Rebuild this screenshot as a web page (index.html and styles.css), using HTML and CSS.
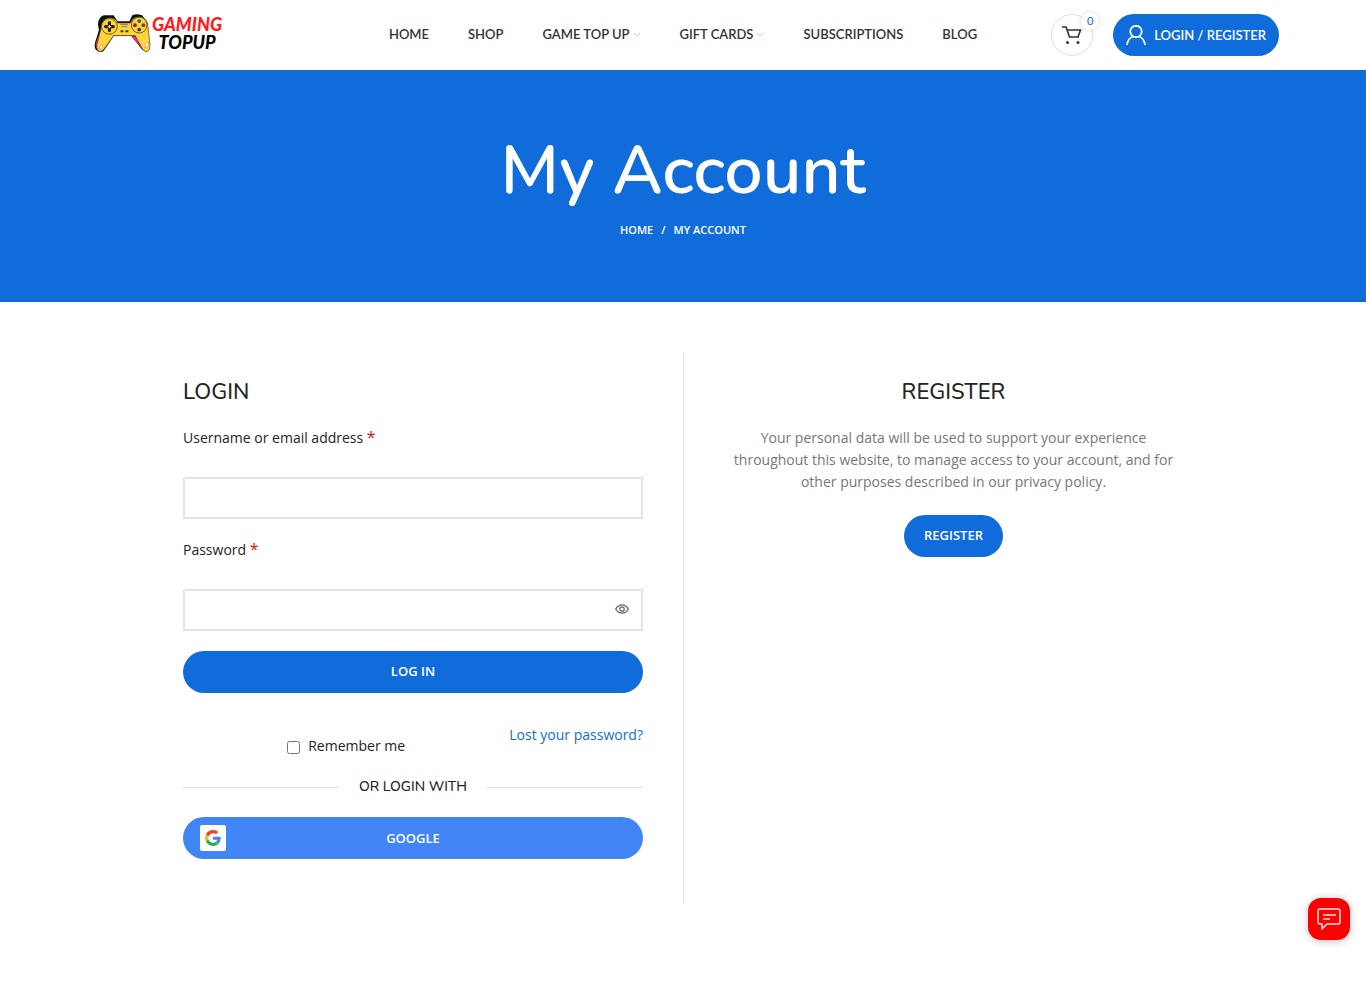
FILE: index.html
```html
<!DOCTYPE html>
<html lang="en">
<head>
  <meta charset="UTF-8" />
  <meta name="viewport" content="width=device-width, initial-scale=1.0" />
  <title>My Account - Gaming Topup</title>
  <link rel="stylesheet" href="styles.css">
</head>
<body>
  <header class="header">
    <div class="header-inner">
      <a class="logo" href="#">
        <svg class="logo-pad" viewBox="0 0 58 42" aria-hidden="true">
          <path d="M4 12Q5 4 10 3L20 3L24 9H36L39 3Q43 1 49 3L54 10L56 34Q54 40 49 38L38 24H20L10 39Q6 42 2 38Q0 36 1 31L5 18Z" fill="#111"/>
          <path d="M6 20L2 31Q1 36 4 38L12 26ZM38 24L49 37L49 25Z" fill="#f0287f"/>
          <path d="M10 8Q16 3 23 8L24 10.700H37L39 7Q46 2 52 7Q55 10 55 15L57 33Q57 40 53 40Q50 40 48 35L42 23.700H20L12 35Q9 40 6 40Q2 39 3 33L7 17Q7 11 10 8Z" fill="#ffd43b" stroke="#222" stroke-width=".6"/>
          <circle cx="15.700" cy="14.300" r="8" fill="#ffd43b" stroke="#463c18" stroke-width=".8"/>
          <circle cx="46" cy="13" r="8" fill="#ffd43b" stroke="#463c18" stroke-width=".8"/>
          <path d="M15.700 10.500v8M11.700 14.500h8" stroke="#222" stroke-width="3.200" stroke-linecap="round"/>
          <path d="M14 14.500h3.400M15.700 12.800v3.400" stroke="#ffd43b" stroke-width="1.200"/>
          <circle cx="46" cy="8.800" r="1.900" fill="#176b56"/>
          <circle cx="41.700" cy="13" r="1.900" fill="#7b2450"/>
          <circle cx="50.300" cy="13" r="1.900" fill="#a8273c"/>
          <circle cx="46" cy="17.500" r="1.900" fill="#283f60"/>
          <path d="M27 12.300h8" stroke="#e66156" stroke-width="1.500"/>
          <path d="M28 14.500h6" stroke="#4dbd8b" stroke-width="1.400"/>
          <path d="M27 19.300h3M32 19.300h3" stroke="#4c4217" stroke-width="2"/>
          <path d="M5 38q1-6 4-5q1 3-4 5M55 30q-4 2-3 6q4-1 3-6" fill="#fff" stroke="#777" stroke-width=".5"/>
        </svg>
        <span class="logo-text"><span class="logo-red">GAMING</span><span>TOPUP</span></span>
      </a>

      <nav class="nav">
        <a href="#">HOME</a>
        <a href="#">SHOP</a>
        <a href="#">GAME TOP UP <svg class="chevron" viewBox="0 0 8 5"><path d="M1 1l3 3 3-3"/></svg></a>
        <a href="#">GIFT CARDS <svg class="chevron" viewBox="0 0 8 5"><path d="M1 1l3 3 3-3"/></svg></a>
        <a href="#">SUBSCRIPTIONS</a>
        <a href="#">BLOG</a>
      </nav>

      <div class="header-tools">
        <a class="cart" href="#" aria-label="Shopping cart">
          <svg viewBox="0 0 20 20" width="20" height="20"><path d="M0 2h4L7.500 12H17M5 5h13.500L16 12" fill="none" stroke="#333" stroke-width="1.600"/><circle cx="5.500" cy="17.500" r="1.500" fill="#333"/><circle cx="16" cy="17.500" r="1.500" fill="#333"/></svg>
          <span class="cart-count">0</span>
        </a>
        <a class="account-btn" href="#">
          <svg viewBox="0 0 20 20" width="20" height="20"><circle cx="10" cy="6.500" r="5.700"/><path d="M1 20q1-7 6-8.500M19 20q-1-7-6-8.500"/></svg>
          LOGIN / REGISTER
        </a>
      </div>
    </div>
  </header>

  <section class="page-title">
    <h1>My Account</h1>
    <div class="breadcrumbs"><a href="#">HOME</a><span>/</span><span>MY ACCOUNT</span></div>
  </section>

  <main class="account">
    <section class="login">
      <h2>LOGIN</h2>
      <form>
        <label class="field-label" for="username">Username or email address <span class="required">*</span></label>
        <input class="field" type="text" id="username" />

        <label class="field-label" for="password">Password <span class="required">*</span></label>
        <div class="password-wrap">
          <input class="field" type="password" id="password" />
          <button class="show-password" type="button" aria-label="Show password">
            <svg viewBox="0 0 14 10" width="14" height="10"><path d="M.700 5Q3 .800 7 .800T13.300 5Q11 9.200 7 9.200T.700 5Z"/><circle cx="7" cy="5" r="2.200"/></svg>
          </button>
        </div>

        <button class="btn btn-login" type="submit">LOG IN</button>

        <div class="login-options">
          <label class="remember" for="remember"><input type="checkbox" id="remember" /> Remember me</label>
          <a href="#">Lost your password?</a>
        </div>

        <div class="divider">OR LOGIN WITH</div>

        <button class="btn btn-google" type="button">
          <span class="google-icon">
            <svg viewBox="0 0 48 48" width="16" height="16">
              <path fill="#ea4335" d="M24 9.500c3.540 0 6.710 1.220 9.210 3.600l6.850-6.850C35.900 2.380 30.470 0 24 0 14.620 0 6.510 5.380 2.560 13.220l7.980 6.190C12.430 13.720 17.740 9.500 24 9.500z"/>
              <path fill="#4285f4" d="M46.980 24.550c0-1.570-.15-3.090-.38-4.550H24v9.020h12.940c-.58 2.960-2.260 5.480-4.780 7.180l7.730 6c4.510-4.180 7.090-10.360 7.090-17.650z"/>
              <path fill="#fbbc05" d="M10.530 28.590A14.500 14.500 0 0 1 9.770 24c0-1.600.27-3.140.76-4.590l-7.980-6.190A24 24 0 0 0 0 24c0 3.880.92 7.540 2.560 10.780z"/>
              <path fill="#34a853" d="M24 48c6.480 0 11.930-2.130 15.890-5.810l-7.730-6c-2.150 1.450-4.920 2.300-8.160 2.300-6.260 0-11.570-4.220-13.470-9.910l-7.980 6.190C6.510 42.620 14.620 48 24 48z"/>
            </svg>
          </span>
          GOOGLE
        </button>
      </form>
    </section>

    <section class="register">
      <h2>REGISTER</h2>
      <p>Your personal data will be used to support your experience throughout this website, to manage access to your account, and for other purposes described in our privacy policy.</p>
      <a class="btn" href="#">REGISTER</a>
    </section>
  </main>

  <button class="chat" type="button" aria-label="Open chat">
    <svg viewBox="0 0 24 22" width="24" height="22"><path d="M3 1h18q2 0 2 2v11q0 2-2 2H10l-5 5v-5H3q-2 0-2-2V3q0-2 2-2zM6 7h13M6 11h7"/></svg>
  </button>
</body>
</html>
```

FILE: styles.css
```css
* {
  box-sizing: border-box;
}
body {
  margin: 0;
  background: #fff;
  color: #242424;
  font-family: "Open Sans", sans-serif;
  font-size: 14px;
  line-height: 22px;
}
a {
  color: #106cda;
  text-decoration: none;
}
h1, h2 {
  margin: 0;
  font-family: Nunito, Lato, sans-serif;
  font-weight: 600;
}

/* Header */
.header-inner {
  display: grid;
  grid-template-columns: 1fr auto 1fr;
  align-items: center;
  max-width: 1206px;
  height: 70px;
  margin: 0 auto;
  padding: 0 7px;
}
.logo {
  display: flex;
  align-items: center;
  gap: 1px;
  padding: 0 7px 4px;
}
.logo-pad {
  width: 57px;
  height: 42px;
}
.logo-text {
  display: flex;
  flex-direction: column;
  align-items: center;
  color: #000;
  font: italic 900 18px/18px Lato, sans-serif;
}
.logo-red {
  color: #ff1b1b;
}
.nav {
  display: flex;
  gap: 39px;
  padding-bottom: 2px;
}
.nav a {
  display: flex;
  align-items: center;
  gap: 3px;
  color: #333;
  font: 600 13px/20px Lato, sans-serif;
}
.chevron {
  width: 8px;
  height: 5px;
  fill: none;
  stroke: #ccc;
}
.header-tools {
  display: flex;
  justify-content: flex-end;
  gap: 20px;
}
.cart {
  position: relative;
  display: flex;
  align-items: center;
  justify-content: center;
  width: 42px;
  height: 42px;
  border: 1px solid #e1e1e1;
  border-radius: 50%;
}
.cart-count {
  position: absolute;
  top: -3px;
  right: -7px;
  width: 18px;
  height: 18px;
  border-radius: 50%;
  background: #fff;
  box-shadow: 0 0 4px rgba(0, 0, 0, 0.17);
  font: 400 11px/18px Lato, sans-serif;
  text-align: center;
}
.account-btn {
  display: flex;
  align-items: center;
  gap: 8px;
  height: 42px;
  padding: 0 13px;
  border-radius: 21px;
  background: #106cda;
  color: #fff;
  font: 600 13px/20px Lato, sans-serif;
}
.account-btn svg {
  fill: none;
  stroke: #fff;
  stroke-width: 1.7;
}

/* Page title */
.page-title {
  padding: 60px 15px;
  background: #106cda;
  color: #fff;
  text-align: center;
}
.page-title h1 {
  font-size: 68px;
  line-height: 82px;
}
.breadcrumbs {
  display: flex;
  justify-content: center;
  gap: 8px;
  padding: 7px 0 1px;
  font-size: 11px;
  font-weight: 600;
}
.breadcrumbs a {
  color: #fff;
}

/* Login and register columns */
.account {
  display: grid;
  grid-template-columns: 1fr 1fr;
  max-width: 1030px;
  margin: 50px auto 90px;
  padding: 0 15px;
}
.account h2 {
  margin-bottom: 20px;
  font-size: 22px;
  font-weight: 500;
  line-height: 30px;
}
.login {
  padding: 25px 40px 45px 0;
}
.register {
  padding: 25px 0 45px 40px;
  border-left: 1px solid #e1e1e1;
  text-align: center;
}
.register p {
  margin: 0 0 22px;
  color: #777;
}
.field-label {
  display: block;
  margin-bottom: 28px;
}
.required {
  color: #e01020;
  font-size: 16px;
  line-height: 1;
}
.field {
  display: block;
  width: 100%;
  height: 42px;
  margin-bottom: 20px;
  padding: 0 15px;
  border: 2px solid #e3e3e3;
  background: #fff;
  font: inherit;
}
.password-wrap {
  position: relative;
}
.show-password {
  position: absolute;
  top: 0;
  right: 0;
  display: flex;
  align-items: center;
  justify-content: center;
  width: 42px;
  height: 40px;
  padding: 0;
  border: none;
  background: none;
  cursor: pointer;
}
.show-password svg {
  fill: none;
  stroke: #666;
  stroke-width: 1.3;
}
.btn {
  display: inline-flex;
  align-items: center;
  justify-content: center;
  height: 42px;
  padding: 0 20px 2px;
  border: none;
  border-radius: 21px;
  background: #106cda;
  color: #fff;
  font: 600 13px/20px "Open Sans", sans-serif;
  cursor: pointer;
}
.btn-login {
  width: 100%;
}
.login-options {
  display: flex;
  justify-content: space-between;
  align-items: flex-start;
  margin-top: 31px;
}
.remember {
  display: flex;
  align-items: center;
  gap: 8px;
  margin: 11px auto 0;
}
.remember input {
  width: 13px;
  height: 13px;
  margin: 3px 0 0;
}
.divider {
  display: flex;
  align-items: center;
  gap: 20px;
  margin: 19px 0;
  font-family: Nunito, Lato, sans-serif;
  font-weight: 500;
}
.divider::before,
.divider::after {
  content: "";
  flex: 1;
  border-top: 1px solid #e3e3e3;
}
.btn-google {
  position: relative;
  width: 100%;
  padding-bottom: 0;
  background: #4285f4;
}
.google-icon {
  position: absolute;
  top: 8px;
  left: 17px;
  display: flex;
  align-items: center;
  justify-content: center;
  width: 26px;
  height: 26px;
  border-radius: 2px;
  background: #fff;
}

/* Chat */
.chat {
  position: fixed;
  right: 16px;
  bottom: 54px;
  display: flex;
  align-items: center;
  justify-content: center;
  width: 42px;
  height: 42px;
  padding: 0;
  border: none;
  border-radius: 13px;
  background: #f00;
  box-shadow: 0 1px 8px rgba(0, 0, 0, 0.25);
  cursor: pointer;
}
.chat svg {
  fill: none;
  stroke: #ffe5e5;
  stroke-width: 1.5;
  stroke-linejoin: round;
}
```
